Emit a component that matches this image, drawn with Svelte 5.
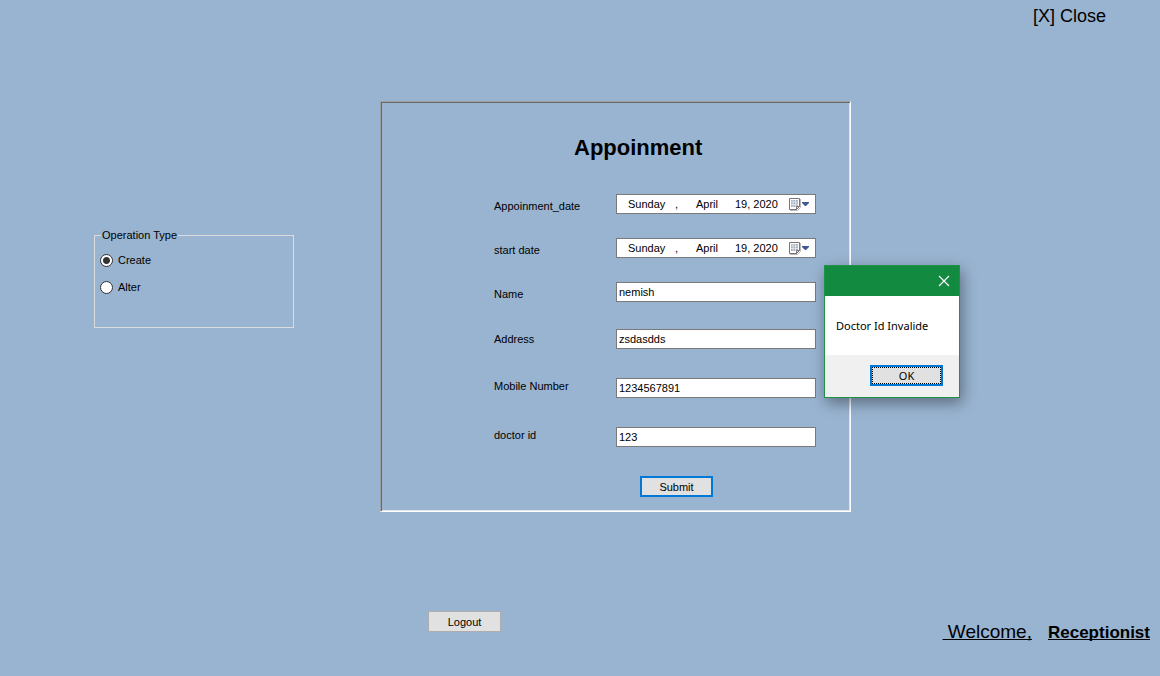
<script>
  let operation = $state('create');
  let dialogOpen = $state(true);

  const dates = [
    { id: 'appointment-date', label: 'Appoinment_date' },
    { id: 'start-date', label: 'start date' }
  ];

  let fields = $state([
    { id: 'name', label: 'Name', value: 'nemish', align: 'low' },
    { id: 'address', label: 'Address', value: 'zsdasdds', align: 'mid' },
    { id: 'mobile', label: 'Mobile Number', value: '1234567891', align: 'high' },
    { id: 'doctor', label: 'doctor id', value: '123', align: 'high' }
  ]);

  function submit(event) {
    event.preventDefault();
    dialogOpen = true;
  }
</script>

<div class="page">
  <header>
    <button type="button" class="close">[X] Close</button>
  </header>

  <main>
    <fieldset>
      <legend>Operation Type</legend>
      <label><input type="radio" name="operation" value="create" bind:group={operation} />Create</label>
      <label><input type="radio" name="operation" value="alter" bind:group={operation} />Alter</label>
    </fieldset>

    <section class="panel">
      <form onsubmit={submit}>
        <h1>Appoinment</h1>
        {#each dates as date}
          <div class="row low">
            <label for={date.id}>{date.label}</label>
            <button type="button" class="date" id={date.id}>
              <span>Sunday</span>
              <span>,</span>
              <span>April</span>
              <span>19, 2020</span>
              <svg width="22" height="14" viewBox="0 0 22 14" aria-hidden="true">
                <path d="M2 13.500h7.500l3-3V2" fill="none" stroke="#bdb9bb" />
                <path d="M1.500 1.500h10v8l-3 3h-7z" fill="#fff" stroke="#7d7476" />
                <path d="M3 3h7v7H3z" fill="#a9b3c3" />
                <path d="M5 3v7M7.500 3v7M3 5h7M3 7.500h7" stroke="#e9edf2" stroke-width="0.700" />
                <path d="M8.500 12.500v-3h3z" fill="#ddd" stroke="#7d7476" />
                <path d="M14 5h7v1l-3 3h-1l-3-3z" fill="#42598d" />
              </svg>
            </button>
          </div>
        {/each}
        {#each fields as field}
          <div class="row {field.align}">
            <label for={field.id}>{field.label}</label>
            <input type="text" id={field.id} bind:value={field.value} />
          </div>
        {/each}
        <button type="submit" class="push default">Submit</button>
      </form>

      {#if dialogOpen}
        <div class="dialog" role="alertdialog" aria-describedby="message">
          <div class="titlebar">
            <button type="button" aria-label="Close" onclick={() => (dialogOpen = false)}>
              <svg width="12" height="12" viewBox="0 0 12 12" aria-hidden="true">
                <path d="M1 1l10 10M11 1L1 11" stroke="#fff" stroke-width="1.200" />
              </svg>
            </button>
          </div>
          <p id="message">Doctor Id Invalide</p>
          <div class="actions">
            <button type="button" class="push default ok" onclick={() => (dialogOpen = false)}><span>OK</span></button>
          </div>
        </div>
      {/if}
    </section>
  </main>

  <footer>
    <button type="button" class="push">Logout</button>
    <div class="user"><span class="welcome">&nbsp;Welcome,</span><strong>Receptionist</strong></div>
  </footer>
</div>

<style>
  :global(body) {
    margin: 0;
    background: #99b4d1;
  }
  .page {
    box-sizing: border-box;
    min-height: 100vh;
    display: flex;
    flex-direction: column;
    font: 11px/16px "Liberation Sans", Arial, sans-serif;
    color: #000;
  }
  button,
  input {
    box-sizing: border-box;
    margin: 0;
    padding: 0;
    font: inherit;
    color: inherit;
  }
  header {
    display: flex;
    justify-content: flex-end;
    padding: 0 54px;
  }
  .close {
    border: 0;
    background: none;
    font-size: 18px;
    line-height: 32px;
  }
  main {
    display: grid;
    grid-template-columns: 94fr 200fr 86fr 471fr 309fr;
    align-items: start;
    margin-top: 69px;
  }
  fieldset {
    grid-column: 2;
    box-sizing: border-box;
    min-width: 0;
    margin: 126px 0 0;
    padding: 9px 5px 32px;
    border: 1px solid #dcdcdc;
    display: flex;
    flex-direction: column;
    gap: 11px;
  }
  legend {
    margin-left: 1px;
    padding: 0 1px;
    line-height: 16px;
  }
  fieldset label {
    display: flex;
    align-items: center;
    gap: 5px;
  }
  input[type="radio"] {
    appearance: none;
    width: 13px;
    height: 13px;
    border: 1px solid #333;
    border-radius: 50%;
    background: #fff;
  }
  input[type="radio"]:checked {
    background: radial-gradient(circle, #333 3px, #fff 4px);
  }
  .panel {
    grid-column: 4;
    position: relative;
    border: 1px solid;
    border-color: #a0a0a0 #fff #fff #a0a0a0;
    box-shadow: inset 1px 1px 0 #696969, inset -1px -1px 0 #e3e3e3;
  }
  form {
    display: flex;
    flex-direction: column;
    padding: 33px 34px 14px 113px;
  }
  h1 {
    margin: 0 0 9px 80px;
    font-size: 22px;
    line-height: 26px;
  }
  .row {
    display: grid;
    grid-template-columns: 1fr 200px;
    margin-top: 24px;
  }
  .row.low {
    align-items: end;
  }
  .row.mid {
    align-items: center;
    margin-top: 27px;
  }
  .row.high {
    align-items: start;
    margin-top: 29px;
  }
  .row input,
  .date {
    width: 100%;
    height: 20px;
    border: 1px solid #7a7a7a;
    border-radius: 0;
    background: #fff;
  }
  .row input {
    padding: 0 2px;
    outline: 0;
  }
  .date {
    display: grid;
    grid-template-columns: 47px 21px 39px 1fr 22px;
    align-items: center;
    padding: 0 5px 0 11px;
    text-align: left;
  }
  .push {
    width: 73px;
    height: 21px;
    border: 1px solid #adadad;
    border-radius: 0;
    background: #e1e1e1;
  }
  .default {
    border: 2px solid #0078d7;
  }
  form .push {
    margin: 29px 0 0 146px;
  }
  .dialog {
    position: absolute;
    left: 443px;
    top: 163px;
    width: 136px;
    box-sizing: border-box;
    border: 1px solid #1f9149;
    background: #fff;
    box-shadow: 2px 5px 14px rgba(0, 0, 0, 0.4);
    font: 11px/16px "Noto Sans", "Segoe UI", sans-serif;
  }
  .titlebar {
    display: flex;
    justify-content: flex-end;
    padding: 0 9px;
    background: #128a40;
  }
  .titlebar button {
    display: grid;
    place-items: center;
    height: 30px;
    border: 0;
    background: none;
  }
  .dialog p {
    margin: 0;
    padding: 22px 11px 21px;
    white-space: nowrap;
  }
  .actions {
    display: flex;
    justify-content: flex-end;
    padding: 10px 16px 11px;
    background: #f0f0f0;
  }
  .ok {
    display: flex;
  }
  .ok span {
    flex: 1;
    align-self: stretch;
    line-height: 15px;
    border: 1px dotted #000;
  }
  footer {
    display: flex;
    justify-content: space-between;
    align-items: flex-start;
    margin-top: 99px;
    padding: 0 10px 0 36.9%;
  }
  .user {
    display: flex;
    align-items: baseline;
    gap: 16px;
    padding-top: 8px;
    font-size: 17px;
    line-height: 26px;
  }
  .welcome {
    font-size: 19px;
  }
  .user > * {
    text-decoration: underline;
    text-decoration-skip-ink: none;
  }
</style>
